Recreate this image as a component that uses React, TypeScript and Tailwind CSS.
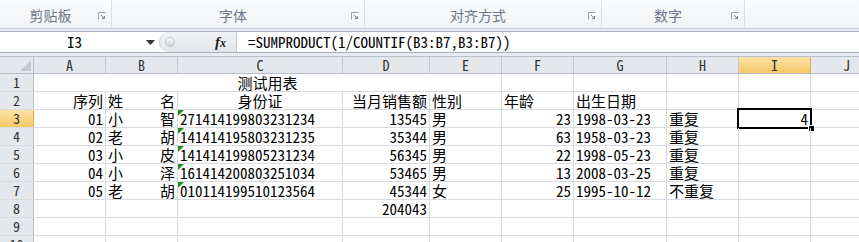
import React from "react";

const cellFont = "font-['Noto_Sans_Mono_CJK_SC','Noto_Sans_CJK_SC',monospace]";

const cols = [
  { key: "A", w: "w-[72px]" },
  { key: "B", w: "w-[72px]" },
  { key: "C", w: "w-[165px]" },
  { key: "D", w: "w-[87px]" },
  { key: "E", w: "w-[72px]" },
  { key: "F", w: "w-[72px]" },
  { key: "G", w: "w-[93px]" },
  { key: "H", w: "w-[72px]" },
  { key: "I", w: "w-[72px]" },
  { key: "J", w: "w-[72px]" },
];

type Cell = { t?: string; a?: "l" | "r" | "c" | "d"; tri?: boolean };

const rows: Cell[][] = [
  [
    { t: "序列", a: "r" },
    { t: "姓名", a: "d" },
    { t: "身份证", a: "c" },
    { t: "当月销售额", a: "r" },
    { t: "性别" },
    { t: "年龄" },
    { t: "出生日期" },
  ],
  [
    { t: "01", a: "r" },
    { t: "小智", a: "d" },
    { t: "271414199803231234", tri: true },
    { t: "13545", a: "r" },
    { t: "男" },
    { t: "23", a: "r" },
    { t: "1998-03-23" },
    { t: "重复" },
    { t: "4", a: "r" },
  ],
  [
    { t: "02", a: "r" },
    { t: "老胡", a: "d" },
    { t: "141414195803231235", tri: true },
    { t: "35344", a: "r" },
    { t: "男" },
    { t: "63", a: "r" },
    { t: "1958-03-23" },
    { t: "重复" },
  ],
  [
    { t: "03", a: "r" },
    { t: "小皮", a: "d" },
    { t: "141414199805231234", tri: true },
    { t: "56345", a: "r" },
    { t: "男" },
    { t: "22", a: "r" },
    { t: "1998-05-23" },
    { t: "重复" },
  ],
  [
    { t: "04", a: "r" },
    { t: "小泽", a: "d" },
    { t: "161414200803251034", tri: true },
    { t: "53465", a: "r" },
    { t: "男" },
    { t: "13", a: "r" },
    { t: "2008-03-25" },
    { t: "重复" },
  ],
  [
    { t: "05", a: "r" },
    { t: "老胡", a: "d" },
    { t: "010114199510123564", tri: true },
    { t: "45344", a: "r" },
    { t: "女" },
    { t: "25", a: "r" },
    { t: "1995-10-12" },
    { t: "不重复" },
  ],
  [{}, {}, {}, { t: "204043", a: "r" }],
  [],
  [],
];

const Launcher = () => (
  <svg width="8" height="8" viewBox="0 0 8 8" className="shrink-0">
    <path d="M0.5 7.5V0.5H7.5" fill="none" stroke="#9aa3ae" />
    <path d="M3 3L6.5 6.5M4 6.5H6.5V4" fill="none" stroke="#7d8794" />
  </svg>
);

const Group = ({ label, w }: { label: string; w: string }) => (
  <div className={`${w} h-full flex items-end pb-[3px] pl-[3px] pr-[5px] border-r border-[#dde1e6] shrink-0`}>
    <span className="flex-1 text-center text-[14px] leading-[20px] text-[#6b778a] font-['Noto_Sans_CJK_SC',sans-serif]">
      {label}
    </span>
    <div className="pb-[5px]">
      <Launcher />
    </div>
  </div>
);

const CellBox = ({ c, w, selected }: { c: Cell; w: string; selected?: boolean }) => {
  const align =
    c.a === "r" ? "justify-end" : c.a === "c" ? "justify-center" : c.a === "d" ? "justify-between" : "justify-start";
  return (
    <div
      className={`${w} h-full shrink-0 box-border border-r border-[#d9dbde] relative flex items-end px-[2px] ${align}`}
    >
      {c.a === "d" && c.t
        ? c.t.split("").map((ch, i) => (
            <span key={i} className="leading-[17px]">
              {ch}
            </span>
          ))
        : c.t && <span className="leading-[17px] whitespace-nowrap">{c.t}</span>}
      {c.tri && (
        <div className="absolute left-0 top-0 w-0 h-0 border-t-[6px] border-r-[6px] border-t-[#1f8f1f] border-r-transparent" />
      )}
      {selected && (
        <>
          <div className="absolute left-[-2px] top-[-2px] right-[-2px] bottom-[-2px] border-2 border-black pointer-events-none" />
          <div className="absolute right-[-5px] bottom-[-5px] w-[7px] h-[7px] bg-black border border-white" />
        </>
      )}
    </div>
  );
};

export default function App() {
  return (
    <div className="w-[859px] h-[242px] overflow-hidden bg-white text-black">
      {/* ribbon */}
      <div className="h-[29px] flex border-b border-[#c6ccd4] bg-gradient-to-b from-[#fbfcfd] to-[#f1f3f6]">
        <Group label="剪贴板" w="w-[112px]" />
        <Group label="字体" w="w-[253px]" />
        <Group label="对齐方式" w="w-[237px]" />
        <Group label="数字" w="w-[143px]" />
        <div className="flex-1" />
      </div>

      {/* formula bar */}
      <div className="h-[27px] bg-[#e8ebef] pt-[2px]">
        <div className="h-[22px] flex border-y border-[#a9b0b9] bg-white">
          <div className="w-[159px] flex items-center relative shrink-0">
            <span className={`flex-1 text-center text-[15px] leading-[20px] pr-[10px] ${cellFont}`}>I3</span>
            <svg width="9" height="5" viewBox="0 0 9 5" className="absolute right-[4px] top-[8px]">
              <path d="M0 0H9L4.5 5Z" fill="#333" />
            </svg>
          </div>
          <div className="w-[78px] shrink-0 flex items-center bg-gradient-to-b from-[#f2f3f5] to-[#e2e5ea] border-r border-[#c4c9d0] rounded-l-[10px] border-l border-[#b4bac3] relative">
            <div className="ml-[5px] w-[10px] h-[10px] rounded-full bg-gradient-to-b from-[#fafafa] to-[#cfd3d8] border border-[#c2c6cc]" />
            <span className="ml-auto mr-[10px] text-[15px] italic font-bold font-['Liberation_Serif',serif] text-[#222]">
              f<span className="text-[12px]">x</span>
            </span>
          </div>
          <div className={`flex-1 flex items-center pl-[11px] text-[15px] leading-[20px] ${cellFont}`}>
            =SUMPRODUCT(1/COUNTIF(B3:B7,B3:B7))
          </div>
        </div>
      </div>

      {/* sheet */}
      <div className={`text-[15px] ${cellFont}`}>
        {/* column header */}
        <div className="h-[18px] flex border-b border-t border-[#b9bfc7] bg-[#e4e7eb] text-[#333] text-[14px]">
          <div className="w-[34px] h-full shrink-0 border-r border-[#b9bfc7] flex items-end justify-end p-[2px]">
            <svg width="11" height="11" viewBox="0 0 11 11">
              <path d="M11 0V11H0Z" fill="#c6cbd2" />
            </svg>
          </div>
          {cols.map((c) => (
            <div
              key={c.key}
              className={`${c.w} h-full shrink-0 box-border border-r flex items-center justify-center leading-[17px] ${
                c.key === "I"
                  ? "bg-gradient-to-b from-[#fbe3a6] to-[#f5c867] border-[#eaa74b]"
                  : "border-[#c3c8cf]"
              }`}
            >
              {c.key}
            </div>
          ))}
        </div>

        {/* row 1 with merged A1:E1 */}
        <div className="h-[18px] flex border-b border-[#d9dbde]">
          <div className="w-[34px] h-full shrink-0 border-r border-[#b9bfc7] bg-[#e4e7eb] text-[#333] text-[14px] flex items-center justify-center leading-[17px]">
            1
          </div>
          <div className="w-[468px] h-full shrink-0 border-r border-[#d9dbde] flex items-end justify-center">
            <span className="leading-[17px]">测试用表</span>
          </div>
          {cols.slice(5).map((c) => (
            <CellBox key={c.key} c={{}} w={c.w} />
          ))}
        </div>

        {rows.map((r, ri) => {
          const n = ri + 2;
          const sel = n === 3;
          return (
            <div key={n} className="h-[18px] flex border-b border-[#d9dbde]">
              <div
                className={`w-[34px] h-full shrink-0 border-r text-[14px] flex items-center justify-center leading-[17px] text-[#333] ${
                  sel
                    ? "bg-gradient-to-b from-[#fbe3a6] to-[#f5c867] border-[#eaa74b]"
                    : "bg-[#e4e7eb] border-[#b9bfc7]"
                }`}
              >
                {n}
              </div>
              {cols.map((c, ci) => (
                <CellBox key={c.key} c={r[ci] || {}} w={c.w} selected={sel && c.key === "I"} />
              ))}
            </div>
          );
        })}
      </div>
    </div>
  );
}
